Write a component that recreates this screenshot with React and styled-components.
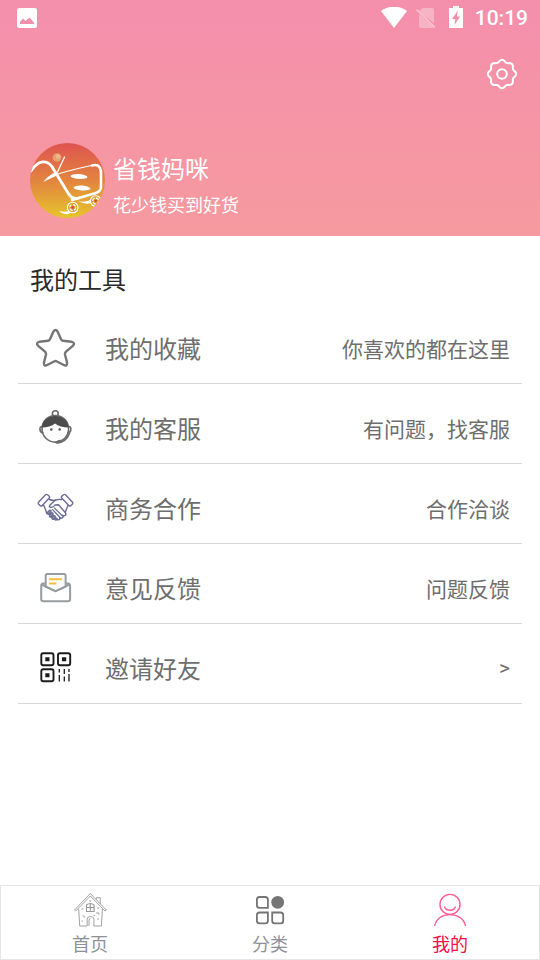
import React, { useState } from "react";
import styled, { createGlobalStyle } from "styled-components";

const GlobalStyle = createGlobalStyle`
  * {
    box-sizing: border-box;
  }

  body {
    margin: 0;
    background: #fff;
    font-family: Roboto, "Noto Sans CJK SC", sans-serif;
  }

  button {
    padding: 0;
    border: none;
    background: none;
    font: inherit;
    color: inherit;
    cursor: pointer;
  }

  svg {
    display: block;
    flex: none;
  }
`;

//styled component for the whole screen
const Screen = styled.div`
  min-height: 100vh;
  display: flex;
  flex-direction: column;
`;

//styled component for the pink top part
const Header = styled.header`
  color: white;
  background: linear-gradient(#f48fac, #f79a9f);
`;

const StatusBar = styled.div`
  height: 36px;
  padding: 0 12px 0 17px;
  display: flex;
  align-items: center;
  justify-content: space-between;
`;

const StatusIcons = styled.div`
  display: flex;
  align-items: center;
`;

const Time = styled.span`
  margin-left: 11px;
  font-size: 21px;
  font-weight: 500;
  line-height: 24px;
`;

const Toolbar = styled.div`
  padding: 22px 22px 0;
  display: flex;
  justify-content: flex-end;
`;

//styled component for the avatar with the name next to it
const Profile = styled.div`
  padding: 53px 30px 14px;
  display: flex;
  align-items: flex-start;
  gap: 8px;
`;

const Info = styled.div`
  padding-top: 7px;
`;

const Name = styled.h1`
  margin: 0;
  font-size: 24px;
  font-weight: 400;
  line-height: 40px;
`;

const Slogan = styled.p`
  margin: 0;
  font-size: 18px;
  line-height: 32px;
`;

const Main = styled.main`
  flex: 1;
  padding: 0 18px;
`;

const Title = styled.h2`
  margin: 0;
  padding: 25px 12px 3px;
  font-size: 24px;
  font-weight: 400;
  line-height: 40px;
  color: #2a2a2a;
`;

//styled component for the list of tools
const List = styled.ul`
  margin: 0;
  padding: 0;
  list-style: none;
`;

const Item = styled.li`
  border-bottom: 1px solid #d8d8d8;
`;

const Row = styled.button`
  width: 100%;
  height: 79px;
  padding: 9px 12px 0 18px;
  display: flex;
  align-items: center;
  color: #6e6e6e;
  text-align: left;
`;

const Label = styled.span`
  flex: 1;
  margin-left: 29px;
  padding-bottom: 2px;
  font-size: 24px;
`;

const Hint = styled.span`
  font-size: 21px;
`;

//styled component for the bottom navigation
const TabBar = styled.nav`
  position: sticky;
  bottom: 0;
  display: flex;
  background: white;
  box-shadow: inset 0 0 0 1px #e6e6e6;
`;

const Tab = styled.button`
  flex: 1;
  padding-top: 7px;
  display: flex;
  flex-direction: column;
  align-items: center;
  gap: 2px;
  font-size: 18px;
  line-height: 30px;
  color: ${props => (props.$active ? "#fa0a46" : "#8e9198")};
`;

const PhotoIcon = () => (
  <svg width="20" height="20" viewBox="0 0 20 20">
    <rect width="20" height="20" rx="2" fill="#fff" />
    <path d="M3 16v-2l3-3.500 2.500 2.500L12.500 9.500 17 14.500v1.500z" fill="#f48fab" />
  </svg>
);

const WifiIcon = () => (
  <svg width="26" height="22" viewBox="0 0 26 22">
    <path d="M0 4C7-1.700 19-1.700 26 4L13 21z" fill="#fff" />
  </svg>
);

const SimIcon = () => (
  <svg width="40" height="24" viewBox="0 0 40 24">
    <path d="M15.500 2H25q2 0 2 2v13L11.500 5.800zM12 8l15 13q-1 1-2 1H14q-2 0-2-2z" fill="#fff" opacity=".32" />
    <path d="M9.500 3.500l18.500 18" stroke="#fbc4d2" strokeWidth="1.6" />
  </svg>
);

const BatteryIcon = () => (
  <svg width="17" height="24" viewBox="0 0 17 24">
    <path d="M6 0h6v2h4v20H2V2h4z" fill="#fff" />
    <path d="M10.500 5L5 13h3.200L7.500 19 13 10.500H9.800L10.800 5z" fill="#f48fab" />
  </svg>
);

//outline of the gear, eight soft teeth round the centre
const gearPath = Array.from({ length: 97 }, (_, i) => {
  const a = (i / 96) * Math.PI * 2;
  const r = 13.1 + 1.1 * Math.cos(8 * a);
  return `${i ? "L" : "M"}${(16 + r * Math.cos(a)).toFixed(2)} ${(16 + r * Math.sin(a)).toFixed(2)}`;
}).join("");

const GearIcon = () => (
  <svg width="32" height="32" viewBox="0 0 32 32" fill="none" stroke="#fff" strokeWidth="2">
    <path d={gearPath} strokeLinejoin="round" />
    <circle cx="16" cy="16" r="4.800" />
  </svg>
);

const Wheel = ({ x, y }) => (
  <g transform={`translate(${x} ${y})`}>
    <circle r="5.300" fill="#e7a035" stroke="#fff" strokeWidth="1.100" />
    <circle r="3" fill="none" stroke="#fff" strokeWidth="1.300" strokeDasharray="3.100 1.600" />
    <circle r="1.200" fill="#d83a4a" />
  </g>
);

const Avatar = () => (
  <svg width="75" height="75" viewBox="0 0 75 75" role="img" aria-label="省钱妈咪">
    <defs>
      <linearGradient id="sun" x1="0" y1="0" x2="0" y2="1">
        <stop offset="0" stopColor="#df5350" />
        <stop offset=".5" stopColor="#e28440" />
        <stop offset="1" stopColor="#e6c52b" />
      </linearGradient>
      <clipPath id="disc">
        <circle cx="37.500" cy="37.500" r="37.500" />
      </clipPath>
    </defs>
    <g clipPath="url(#disc)">
      <rect width="75" height="75" fill="url(#sun)" />
      <g fill="none" stroke="#fff" strokeLinecap="round" strokeLinejoin="round">
        <path d="M1 28C8 17 18 15 24 27L38 50Q42 57 49 55" strokeWidth="2.800" />
        <path d="M42 57L66 50Q71 48 71 44V29Q70 20 62 22.500" strokeWidth="2.600" />
        <path d="M64 22Q48 25 28 31" strokeWidth="1.200" />
        <path d="M34.500 14L27.500 29" strokeWidth="1.300" />
      </g>
      <path d="M25 29l2 3.500-14 6.500q5-6 12-10z" fill="#fff" />
      <circle cx="27" cy="14.500" r="4.300" fill="#e9a071" />
      <circle cx="28.200" cy="13.500" r="2.200" fill="#f0b98a" />
      <ellipse cx="49" cy="33.500" rx="8.500" ry="2.400" transform="rotate(4 49 33.500)" fill="#fff" />
      <ellipse cx="52" cy="45" rx="8.500" ry="2.400" transform="rotate(4 52 45)" fill="#fff" />
      <path d="M29 68q7 2 13-1l-1 3q-7 3-12-2zM48 58q7 2 14-2l-1 4q-6 2-13-2z" fill="#fff" />
      <Wheel x={42.7} y={64.5} />
      <Wheel x={65.7} y={58} />
    </g>
  </svg>
);

const StarIcon = () => (
  <svg width="40" height="40" viewBox="0 0 40 40" fill="none" stroke="#757575" strokeWidth="2.400">
    <path
      d="M17.300 3.800Q19.500.2 21.700 3.800L25 11.200Q25.600 12.500 27 12.800L35.500 13.800Q39.700 14.700 36.800 17.800L30 23.700Q28.800 24.900 29 26.500L31 34.500Q31.400 38.800 27.800 37L21 33.500Q19.500 32.600 18 33.500L11.200 37Q7.600 38.800 8 34.500L10 26.500Q10.200 24.900 9 23.700L2.200 17.800Q-.7 14.700 3.500 13.800L12 12.800Q13.400 12.500 14 11.200z"
      strokeLinejoin="round"
    />
  </svg>
);

const ServiceIcon = () => (
  <svg width="40" height="40" viewBox="0 0 40 40" fill="none" stroke="#6c6c6c" strokeWidth="1.600">
    <circle cx="19.300" cy="5.600" r="2.900" />
    <path d="M6.500 18.500q-3-.2-2.500 3.500.5 3 3.500 2.800M32.300 18.500q3-.2 2.500 3.500-.5 3-3.500 2.800" />
    <circle cx="19.300" cy="20.800" r="13.300" />
    <path d="M6 19.500C7 4 31.500 4 32.600 19.500 27 19.500 22 18 19 15.500 16 18 11 19.500 6 19.500z" fill="#4c4c4c" stroke="none" />
    <path d="M33.500 25Q30 34.500 20.500 35" strokeWidth="2" />
    <path d="M19.500 35q3-3 6-2" strokeWidth="2" />
    <circle cx="15.300" cy="21.500" r="1.300" fill="#555" stroke="none" />
    <circle cx="23.700" cy="21.500" r="1.300" fill="#555" stroke="none" />
  </svg>
);

const HandshakeIcon = () => (
  <svg width="40" height="40" viewBox="0 0 40 40" fill="none" stroke="#6b6b94" strokeWidth="1.400" strokeLinejoin="round" strokeLinecap="round">
    <path d="M9.500 6.800q1-.8 2 0l1.800 1.500q.8.9 0 1.800L6 17.700q-.8.8-1.700 0L2.500 16q-.7-.9 0-1.800z" />
    <path d="M29.500 6.800q-1-.8-2 0l-1.800 1.500q-.8.9 0 1.800l7.300 7.600q.8.8 1.700 0l1.800-1.700q.7-.9 0-1.800z" />
    <path d="M13.500 11.500q3 1.500 6.500.5 3-1 5.500-.5" />
    <path d="M19.500 12L14 17q-1.500 2 1 2.500 2.500 0 4-2.500l3.500-.2 7 8q1 1.500-.3 2.600-1.200.8-2.500-.2 1 2-.5 2.700-1.200.8-2.500-.5.6 1.900-.9 2.400-1.200.4-2.300-1" />
    <path d="M7.500 17q2 4 3.200 8.500M32 17.500q-1.500 3-2.700 7" />
    <path d="M18.500 20l8 8M16.500 21.500l8 8.500" strokeWidth="1.100" />
    <path d="M11.500 24.500l2-2.200q1.800-.6 1.500 1.400l-2 2.300q-1.900.8-1.500-1.500zM13.500 27.500l2-2.500q1.900-.6 1.500 1.500l-1.800 2.300q-1.900.8-1.700-1.300zM16 29.800l1.500-2q1.900-.6 1.700 1.400l-1.400 1.900q-1.900.6-1.800-1.300zM18.500 31.300l1-1.300q1.800-.3 1.500 1.500-1 1.200-2.500-.2z" fill="#9a9ab8" />
  </svg>
);

const MailIcon = () => (
  <svg width="40" height="40" viewBox="0 0 40 40" fill="none" stroke="#979ca0" strokeWidth="2" strokeLinejoin="round">
    <path d="M9.700 15.500H7.500q-2.300.3-2.300 2.500v13q0 2.300 2.300 2.300h24.300q2.300 0 2.300-2.300V18q0-2.200-2.300-2.500h-2.200" />
    <path d="M5.500 16.500l14 6.700 14-6.700" />
    <path d="M9.700 18.500V7.500Q9.700 6 11.200 6h16.900q1.500 0 1.500 1.500v11l-10.100 4.700z" fill="#fff" />
    <path d="M13 11.300h13M13 15.500h7.500" stroke="#f7bd3c" />
  </svg>
);

const QrIcon = () => (
  <svg width="40" height="40" viewBox="0 0 40 40" fill="none" stroke="#1c1c1c" strokeWidth="1.900">
    <rect x="5.300" y="5.300" width="12.200" height="12" rx="2" />
    <rect x="22" y="5.300" width="12.200" height="12" rx="2" />
    <rect x="5.300" y="21.300" width="12.200" height="12" rx="2" />
    <path d="M9.300 11.300h4.200M26 11.300h4.200M9.300 27.300h4.200" strokeWidth="4" />
    <path d="M23.300 21v3.500M23.300 27v6.500M28.300 21v5M28.300 28.500v5M33 21v3M33 26v7.500" strokeWidth="1.300" />
  </svg>
);

const HomeIcon = () => (
  <svg width="36" height="36" viewBox="0 0 36 36" fill="none" stroke="#999" strokeWidth=".9">
    <path d="M18.300 1.500L2.500 18l1.300 1 14.500-15 14.700 15 1.300-1zM24.300 7.500V5.700h4v6.500" />
    <path d="M6.700 17l1 17h7.500v-7q0-2.500 3.400-2.500 3.300 0 3.300 2.500v7h7.500l1-17" />
    <path d="M17 34v-6q0-1.500 1.500-1.500" />
    <path d="M14.500 19.500V13q3.800-3 7.600 0v6.500zM18.300 12v7.500M14.500 15.500h7.600" strokeWidth="1.100" />
    <path d="M9.500 17h2M10.500 24h2M24 21h3M26 22h1.500M9.500 29h1.500M25 27h2M25 16h2M17 9h2M21.500 23.500h1.500M12 25h1" />
  </svg>
);

const CategoryIcon = () => (
  <svg width="36" height="36" viewBox="0 0 36 36" fill="none" stroke="#757575" strokeWidth="1.800">
    <path d="M7.500 5h5.800q2.600 0 2.600 2.600v8.300H7.500q-2.600 0-2.600-2.600V7.600Q4.900 5 7.500 5z" />
    <circle cx="25.700" cy="10.300" r="6.400" fill="#757575" stroke="none" />
    <path d="M7.500 20.500h8.400v8.300q0 2.600-2.600 2.600H7.500q-2.600 0-2.600-2.600v-5.700q0-2.600 2.600-2.600z" />
    <path d="M20.200 20.500h8.400q2.600 0 2.600 2.600v5.700q0 2.600-2.600 2.600h-5.800q-2.600 0-2.600-2.600z" />
  </svg>
);

const UserIcon = () => (
  <svg width="36" height="36" viewBox="0 0 36 36" fill="none" stroke="#ff5a91" strokeWidth="1.400">
    <circle cx="18" cy="12.400" r="10" />
    <path d="M12.400 14.500q1.300 3.800 5.600 3.800t5.600-3.800M2.700 34C4 26.500 10.500 22.600 18 22.600S32 26.500 33.500 34" />
  </svg>
);

const tools = [
  { label: "我的收藏", hint: "你喜欢的都在这里", Icon: StarIcon },
  { label: "我的客服", hint: "有问题，找客服", Icon: ServiceIcon },
  { label: "商务合作", hint: "合作洽谈", Icon: HandshakeIcon },
  { label: "意见反馈", hint: "问题反馈", Icon: MailIcon },
  { label: "邀请好友", hint: ">", Icon: QrIcon }
];

const tabs = [
  { label: "首页", Icon: HomeIcon },
  { label: "分类", Icon: CategoryIcon },
  { label: "我的", Icon: UserIcon }
];

const App = () => {
  const [active, setActive] = useState("我的");
  return (
    <>
      <GlobalStyle />
      <Screen>
        <Header>
          <StatusBar>
            <PhotoIcon />
            <StatusIcons>
              <WifiIcon />
              <SimIcon />
              <BatteryIcon />
              <Time>10:19</Time>
            </StatusIcons>
          </StatusBar>
          <Toolbar>
            <button aria-label="设置">
              <GearIcon />
            </button>
          </Toolbar>
          <Profile>
            <Avatar />
            <Info>
              <Name>省钱妈咪</Name>
              <Slogan>花少钱买到好货</Slogan>
            </Info>
          </Profile>
        </Header>
        <Main>
          <Title>我的工具</Title>
          <List>
            {tools.map(({ label, hint, Icon }) => (
              <Item key={label}>
                <Row>
                  <Icon />
                  <Label>{label}</Label>
                  <Hint>{hint}</Hint>
                </Row>
              </Item>
            ))}
          </List>
        </Main>
        <TabBar>
          {tabs.map(({ label, Icon }) => (
            <Tab key={label} $active={label === active} onClick={() => setActive(label)}>
              <Icon />
              {label}
            </Tab>
          ))}
        </TabBar>
      </Screen>
    </>
  );
};

export default App;
